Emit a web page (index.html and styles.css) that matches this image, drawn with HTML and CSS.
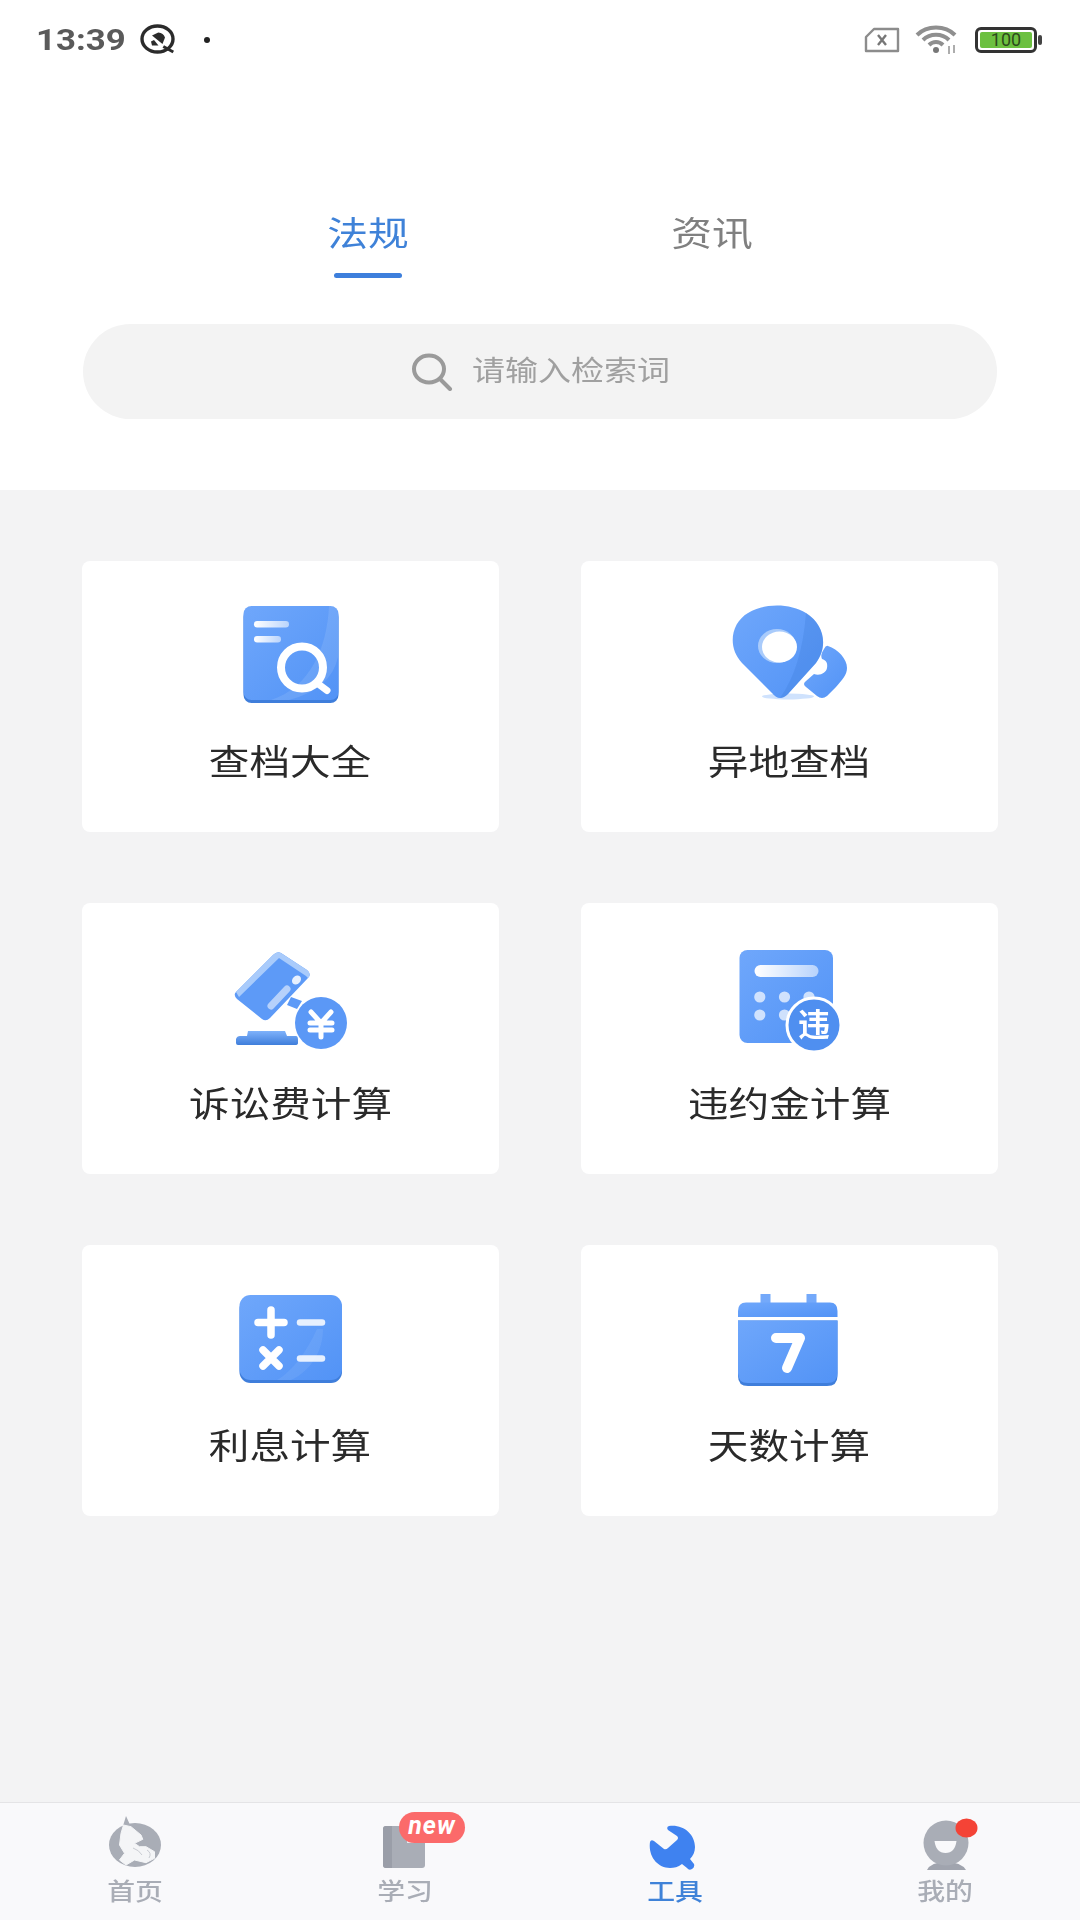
FILE: index.html
```html
<!DOCTYPE html>
<html lang="zh-CN">
<head>
    <meta charset="UTF-8">
    <meta name="viewport" content="width=device-width, initial-scale=1.0">
    <title>工具</title>
    <link rel="stylesheet" href="styles.css">
</head>
<body>

<svg class="defs" width="0" height="0">
    <defs>
        <linearGradient id="blue" x1="0" y1="0" x2="1" y2="1">
            <stop offset="0" stop-color="#6fa7fb"/>
            <stop offset="1" stop-color="#5293f6"/>
        </linearGradient>
        <linearGradient id="edge" x1="0" y1="0" x2="0" y2="1">
            <stop offset="0" stop-color="#7fb2fb"/>
            <stop offset="1" stop-color="#3f7edb"/>
        </linearGradient>
        <linearGradient id="fade" x1="0" y1="0" x2="1" y2="0">
            <stop offset="0" stop-color="#ffffff"/>
            <stop offset="1" stop-color="#ffffff" stop-opacity="0.55"/>
        </linearGradient>
    </defs>
</svg>

<div class="status-bar">
    <div class="status-left">
        <span class="time">13:39</span>
        <svg class="st-app" width="36" height="32" viewBox="0 0 36 32">
            <ellipse cx="17.5" cy="15" rx="15.5" ry="13" fill="none" stroke="#2b2b2b" stroke-width="3.4"/>
            <path d="M12 11.5 L18.3 8.5 Q23.5 9 25 13.5 L22.5 20 Z" fill="#2b2b2b"/>
            <path d="M11 17.5 L14 16 L18.5 21.5 H12 Z" fill="#2b2b2b"/>
            <path d="M23.3 22.5 L33.3 28" stroke="#2b2b2b" stroke-width="3"/>
        </svg>
        <span class="st-dot"></span>
    </div>
    <div class="status-right">
        <svg width="36" height="26" viewBox="0 0 36 26">
            <path d="M10 2 H34 V24 H2 V10 Z" fill="none" stroke="#8c8c8c" stroke-width="2.4" stroke-linejoin="round"/>
            <path d="M14 8 L22 18 M22 8 L14 18" stroke="#777" stroke-width="2.4"/>
        </svg>
        <svg width="44" height="30" viewBox="0 0 44 30">
            <path d="M2 10 C12 0 30 0 40 10" fill="none" stroke="#8f8f8f" stroke-width="4"/>
            <path d="M8 15 C15 8 27 8 34 15" fill="none" stroke="#8f8f8f" stroke-width="4"/>
            <path d="M14 20 C18 16 24 16 28 20" fill="none" stroke="#8f8f8f" stroke-width="4"/>
            <circle cx="21" cy="25" r="3" fill="#777"/>
            <path d="M34 21 V29 M39 20 V28" stroke="#999" stroke-width="1.6"/>
        </svg>
        <div class="battery">
            <div class="battery-fill">100</div>
        </div>
        <span class="battery-tip"></span>
    </div>
</div>

<div class="top">
    <div class="tabs">
        <div class="tab active">
            <span class="wide">法规</span>
            <i class="tab-line"></i>
        </div>
        <div class="tab">
            <span class="wide">资讯</span>
            <i class="tab-line"></i>
        </div>
    </div>
    <div class="search">
        <svg width="42" height="38" viewBox="0 0 42 38">
            <ellipse cx="18" cy="16" rx="15" ry="13.5" fill="none" stroke="#9a9a9a" stroke-width="4"/>
            <path d="M29 26 L39 36" stroke="#9a9a9a" stroke-width="4" stroke-linecap="round"/>
        </svg>
        <span class="placeholder wide">请输入检索词</span>
    </div>
</div>

<div class="main">
    <div class="grid">
        <div class="card">
            <svg class="card-icon" width="120" height="116" viewBox="0 0 120 116">
                <rect x="12.5" y="12" width="95" height="94" rx="8" fill="#3f7edb"/>
                <rect x="12.5" y="9" width="95" height="94" rx="8" fill="url(#blue)"/>
                <path d="M98 9 H100 Q107 9 107 17 V60 Q100 92 58 103 H40 C80 90 96 50 98 9 Z" fill="#fff" opacity="0.1"/>
                <rect x="23" y="24" width="35" height="6.5" rx="3.2" fill="url(#fade)"/>
                <rect x="23" y="39" width="27" height="6.5" rx="3.2" fill="url(#fade)"/>
                <circle cx="71" cy="70.5" r="21" fill="none" stroke="#fff" stroke-width="8"/>
                <path d="M86 86 L96 93.5" stroke="#fff" stroke-width="7" stroke-linecap="round"/>
            </svg>
            <span class="card-label wide">查档大全</span>
        </div>
        <div class="card">
            <svg class="card-icon" width="120" height="116" viewBox="0 0 120 116">
                <ellipse cx="58" cy="99.5" rx="26" ry="3" fill="#cfe2fd"/>
                <path d="M50 101 Q46 101 42 96 L12 66 C-3 50 1 26 18 16 C34 6 60 6 76 16 C95 28 98 50 86 66 L58 97 Q54 101 50 101 Z" fill="url(#blue)"/>
                <path d="M76 16 C95 28 98 50 86 66 L58 97 Q54 101 50 101 Q72 70 76 16 Z" fill="#3f7edb" opacity="0.3"/>
                <ellipse cx="47" cy="49" rx="19" ry="17" fill="#a9cbfb"/>
                <ellipse cx="49.5" cy="50" rx="17.5" ry="15.5" fill="#fff"/>
                <path d="M98 49 C108 52 117 62 117 71 C117 78 112 83 106 90 L97 99 Q92 103 87 99 L76 90 Q72 87 76 84 L84 77 C90 79 96 76 97 71 C98 66 96 63 92 62 Q90 58 94 52 Q96 48 98 49 Z" fill="url(#blue)"/>
            </svg>
            <span class="card-label wide">异地查档</span>
        </div>
        <div class="card">
            <svg class="card-icon" width="120" height="116" viewBox="0 0 120 116">
                <path d="M60 58 L71 62 L66 70 L56 66 Z" fill="#5d9af7"/>
                <path d="M42 16 Q46 12 50 14 L76 31 Q81 35 77 39 L39 79 Q35 83 31 80 L6 60 Q2 56 5 53 Z" fill="#5d9af7"/>
                <path d="M42 16 Q46 12 50 14 L76 31 Q81 35 77 39 L75 37 L48 19 L8 58 L5 53 Z" fill="#a9cbfb"/>
                <ellipse cx="65.5" cy="41" rx="5" ry="4" transform="rotate(-45 65.5 41)" fill="#fff" opacity="0.85"/>
                <path d="M56 50 L40 67" stroke="#fff" opacity="0.55" stroke-width="7" stroke-linecap="round"/>
                <path d="M17 92 H54 L56 97 H65 Q67 97 67 101 V104 Q67 106 64 106 H7 Q5 106 5 104 V100 Q6 97 9 97 H16 Z" fill="url(#edge)"/>
                <circle cx="90" cy="84" r="26" fill="#5b98f6"/>
                <path d="M80 73 L90 84 L100 73 M79 84 H101 M79 91 H101 M90 84 V98" fill="none" stroke="#fff" stroke-width="5" stroke-linecap="round" stroke-linejoin="round"/>
            </svg>
            <span class="card-label wide">诉讼费计算</span>
        </div>
        <div class="card">
            <svg class="card-icon" width="120" height="116" viewBox="0 0 120 116">
                <rect x="9.5" y="11" width="93.5" height="93" rx="8" fill="url(#blue)"/>
                <rect x="24.5" y="26" width="64" height="12" rx="6" fill="url(#fade)"/>
                <g fill="#fff" opacity="0.7">
                    <circle cx="29.8" cy="58" r="5.6"/>
                    <circle cx="54.5" cy="58" r="5.6"/>
                    <circle cx="79" cy="58" r="5.6"/>
                    <circle cx="29.8" cy="76" r="5.6"/>
                    <circle cx="54.5" cy="76" r="5.6"/>
                </g>
                <circle cx="84" cy="86" r="27" fill="#4f8ff0" stroke="#fff" stroke-width="3"/>
                <text class="badge-char" x="84" y="97" text-anchor="middle">违</text>
            </svg>
            <span class="card-label wide">违约金计算</span>
        </div>
        <div class="card">
            <svg class="card-icon" width="120" height="116" viewBox="0 0 120 116">
                <rect x="8.5" y="17" width="102.5" height="85" rx="11" fill="#3f7edb"/>
                <rect x="8.5" y="14" width="102.5" height="85" rx="11" fill="url(#blue)"/>
                <path d="M86 48 C76 70 62 90 46 99 H60 C80 90 92 70 92 48 Z" fill="#fff" opacity="0.07"/>
                <g stroke="#fff" stroke-linecap="round" fill="none">
                    <path d="M27 41.5 H53 M40 29 V54" stroke-width="7.5"/>
                    <path d="M69 41.5 H91" stroke-width="6.5" opacity="0.85"/>
                    <path d="M32 69 L48 85 M48 69 L32 85" stroke-width="7.5"/>
                    <path d="M69 77.5 H91" stroke-width="6.5" opacity="0.85"/>
                </g>
            </svg>
            <span class="card-label wide">利息计算</span>
        </div>
        <div class="card">
            <svg class="card-icon" width="120" height="116" viewBox="0 0 120 116">
                <rect x="30.5" y="13" width="10" height="14" fill="#74a9fa"/>
                <rect x="76.5" y="13" width="10" height="14" fill="#74a9fa"/>
                <path d="M8 36 V30 Q8 21.5 16 21.5 H100 Q107.5 21.5 107.5 30 V36 Z" fill="url(#blue)"/>
                <path d="M8 39.5 H107.5 V95 Q107.5 105 97 105 H18 Q8 105 8 95 Z" fill="#3f7edb"/>
                <path d="M8 39.5 H107.5 V92 Q107.5 102 97 102 H18 Q8 102 8 92 Z" fill="url(#blue)"/>
                <path d="M46 57 H70 L57 87" fill="none" stroke="#fff" stroke-width="10" stroke-linecap="round" stroke-linejoin="round"/>
            </svg>
            <span class="card-label wide">天数计算</span>
        </div>
    </div>
</div>

<div class="nav">
    <div class="nav-item">
        <svg class="nav-icon" width="80" height="62" viewBox="0 0 80 62">
            <ellipse cx="40" cy="33" rx="26" ry="22" fill="#a9adb6"/>
            <path d="M28 14 L31 4 L36 15 Z" fill="#a9adb6"/>
            <path d="M28.5 13 L36 14.7 L46 23 L47.8 27.3 L39.5 31.3 L44.5 34.7 L51 34.7 L59.5 39.7 L59.5 46.3 L51 50.7 L39.5 48 L31 53 L24.5 48 L29.5 41.3 L24.5 33 L26 21.3 Z" fill="#f4f5f7" stroke="#f4f5f7" stroke-linejoin="round"/>
            <path d="M38 36 Q44 38 47 43 M52 38 Q57 41 54 46" fill="none" stroke="#c9ccd2" stroke-width="1"/>
        </svg>
        <span class="nav-label wide">首页</span>
    </div>
    <div class="nav-item">
        <svg class="nav-icon" width="80" height="62" viewBox="0 0 80 62">
            <rect x="18" y="14" width="42" height="42" rx="3" fill="#a9adb6"/>
            <path d="M21 14 H27 V56 H21 Q18 56 18 53 V17 Q18 14 21 14 Z" fill="#9a9ea8"/>
            <path d="M42 26 L53 26 V31 H42 Z" fill="#e9eaee"/>
        </svg>
        <span class="nav-label wide">学习</span>
        <span class="new-badge">new</span>
    </div>
    <div class="nav-item active">
        <svg class="nav-icon" width="80" height="62" viewBox="0 0 80 62">
            <path d="M34 14 C48 12 60 22 60 35 C60 40 58 44 55 47 L59 52 Q60 55 57 57 Q54 59 52 56 L47 52 C43 55 39 56 35 56 C22 56 13 44 15 30 Q16 27 19 29 L29 37 Q31 38 33 36 L42 28 Q44 26 42 24 L33 18 Q31 15 34 14 Z" fill="#3f82f0"/>
        </svg>
        <span class="nav-label wide">工具</span>
    </div>
    <div class="nav-item">
        <svg class="nav-icon" width="80" height="62" viewBox="0 0 80 62">
            <path d="M22 58 Q26 50 41 50 Q56 50 61 58 Z" fill="#a0a4ae"/>
            <circle cx="41" cy="31" r="22.5" fill="#a9adb6"/>
            <path d="M29.5 29 H51.5 Q50 41 40.5 41 Q31 41 29.5 29 Z" fill="#f9f9fb"/>
            <ellipse cx="61.5" cy="16" rx="11" ry="9.5" fill="#f44336"/>
        </svg>
        <span class="nav-label wide">我的</span>
    </div>
</div>

</body>
</html>
```

FILE: styles.css
```css
* {
    margin: 0;
    box-sizing: border-box;
}

body {
    font-family: "Noto Sans CJK SC", "Noto Sans", sans-serif;
    width: 1080px;
    height: 1920px;
    display: flex;
    flex-direction: column;
    overflow: hidden;
    background: #fff;
}

.defs {
    position: absolute;
}

/* text in the reference is stretched sideways */
.wide {
    display: inline-block;
    transform: scaleX(1.16);
}

.status-bar {
    height: 80px;
    display: flex;
    justify-content: space-between;
    align-items: center;
    padding: 0 38px 0 36px;
}

.status-left, .status-right {
    display: flex;
    align-items: center;
}

.time {
    font-family: Roboto, sans-serif;
    font-size: 29px;
    font-weight: 700;
    color: #5a5a5a;
    width: 104px;
    display: inline-block;
    transform: scaleX(1.2);
    transform-origin: left center;
}

.st-dot {
    width: 6px;
    height: 6px;
    border-radius: 50%;
    background: #222;
    margin-left: 28px;
}

.status-right {
    gap: 15px;
}

.battery {
    width: 62px;
    height: 26px;
    border: 3px solid #333;
    border-radius: 6px;
    padding: 2px;
    margin-left: 1px;
}

.battery-fill {
    height: 100%;
    background: #6cc040;
    border-radius: 2px;
    color: #2c4a1c;
    font-family: Roboto, sans-serif;
    font-size: 18px;
    line-height: 16px;
    text-align: center;
}

.battery-tip {
    width: 4px;
    height: 10px;
    background: #444;
    border-radius: 2px;
    margin-left: -14px;
}

.top {
    height: 410px;
    padding: 131px 83px 0;
}

.tabs {
    display: flex;
    justify-content: center;
    gap: 144px;
}

.tab {
    width: 200px;
    text-align: center;
    font-size: 34px;
    line-height: 42px;
    color: #808080;
}

.tab .wide {
    transform: scaleX(1.2);
}

.tab.active {
    color: #3f82d8;
}

.tab-line {
    display: block;
    width: 68px;
    height: 5px;
    margin: 20px auto 0;
    border-radius: 3px;
}

.tab.active .tab-line {
    background: #3d7fdc;
}

.search {
    height: 95px;
    margin-top: 46px;
    border-radius: 48px;
    background: #f3f3f3;
    display: flex;
    align-items: center;
    justify-content: center;
    gap: 34px;
    padding-left: 0;
    padding-right: 14px;
}

.search .wide {
    transform: scaleX(1.18);
}

.placeholder {
    font-size: 28px;
    margin-top: -6px;
    color: #a0a0a0;
}

.main {
    flex: 1;
    background: #f3f3f4;
    padding: 71px 82px 0;
}

.grid {
    display: grid;
    grid-template-columns: 417px 417px;
    grid-auto-rows: 271px;
    column-gap: 82px;
    row-gap: 71px;
}

.card {
    background: #fff;
    border-radius: 8px;
    display: flex;
    flex-direction: column;
    align-items: center;
    padding-top: 36px;
}

.card-icon {
    display: block;
    filter: blur(0.4px);
}

.card-label {
    margin-top: 22px;
    font-size: 35px;
    line-height: 50px;
    color: #2a2a2a;
}

.badge-char {
    font-family: "Noto Sans CJK SC", sans-serif;
    font-size: 32px;
    font-weight: 700;
    fill: #fff;
}

.nav {
    height: 118px;
    background: #f9f9fb;
    border-top: 1px solid #e4e4e6;
    display: flex;
}

.nav-item {
    position: relative;
    width: 270px;
    display: flex;
    flex-direction: column;
    align-items: center;
    padding-top: 9px;
}

.nav-icon {
    display: block;
    filter: blur(0.3px);
}

.nav-label {
    font-size: 24px;
    font-weight: 500;
    line-height: 30px;
    margin-top: 1px;
    color: #a9adb6;
}

.nav-item.active .nav-label {
    color: #3f82d8;
}

.new-badge {
    position: absolute;
    left: 129px;
    top: 9px;
    width: 66px;
    height: 31px;
    border-radius: 16px;
    background: #fb6a6a;
    color: #fff;
    font-family: Roboto, sans-serif;
    font-size: 25px;
    font-weight: 700;
    font-style: italic;
    letter-spacing: 1px;
    line-height: 28px;
    text-align: center;
}
```
